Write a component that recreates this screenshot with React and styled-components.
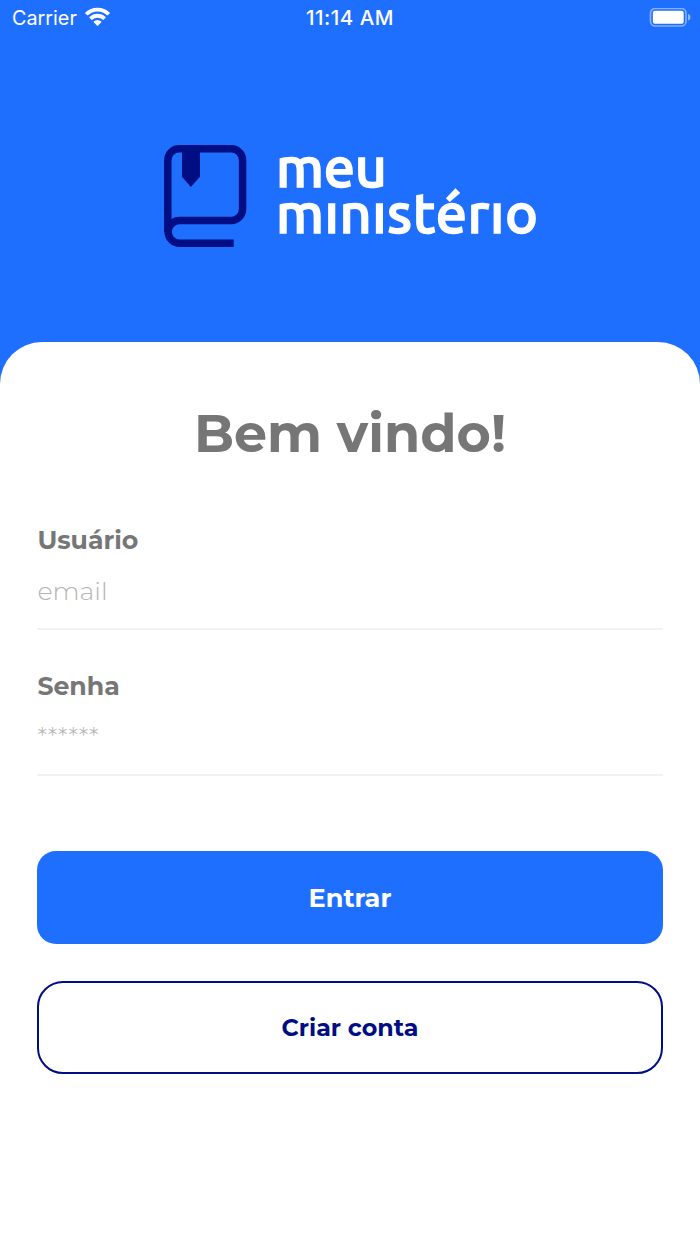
import React from 'react'
import styled, { createGlobalStyle } from 'styled-components'

const blue = '#1f6fff'
const navy = '#000d83'
const gray = '#767676'

export default () => (
	<Screen>
		<GlobalStyle />
		<StatusBar />
		<Logo />
		<Panel>
			<Title>Bem vindo!</Title>
			<form onSubmit={e => e.preventDefault()}>
				<Field label="Usuário" name="user" placeholder="email" />
				<Field
					label="Senha"
					name="password"
					type="password"
					placeholder="******"
				/>
				<Actions>
					<Button type="submit">Entrar</Button>
					<Button type="button" $outline>
						Criar conta
					</Button>
				</Actions>
			</form>
		</Panel>
	</Screen>
)

const StatusBar = () => (
	<Bar>
		<Carrier>
			Carrier
			<WifiIcon width="27" height="20" viewBox="0 0 26 19" fill="#fff">
				<path d="M13 4.2c3.600 0 6.800 1.400 9.200 3.700.2.2.5.2.7 0l2-1.900c.2-.2.2-.5 0-.7A17.300 17.300 0 0 0 13 .5 17.300 17.300 0 0 0 1.100 5.300c-.2.2-.2.5 0 .7l2 1.900c.2.2.5.2.7 0A13.200 13.200 0 0 1 13 4.200z" />
				<path d="M13 10.300c2 0 3.800.7 5.100 1.900.2.2.5.2.7 0l2-2c.2-.2.2-.5 0-.7A11.400 11.400 0 0 0 13 6.400c-3 0-5.800 1.200-7.800 3.100-.2.2-.2.5 0 .7l2 2c.2.2.5.2.7 0A7.700 7.700 0 0 1 13 10.300z" />
				<path d="M16.700 13.900c.2.2.2.5 0 .7l-3.300 3.300c-.2.2-.5.2-.7 0l-3.300-3.300c-.2-.2-.2-.5 0-.7a5.500 5.500 0 0 1 7.300 0z" />
			</WifiIcon>
		</Carrier>
		<Clock>11:14 AM</Clock>
		<Battery>
			<svg width="42" height="20" viewBox="0 0 42 20">
				<rect
					x="1.500"
					y="0.500"
					width="35.500"
					height="17.500"
					rx="4.800"
					fill="none"
					stroke="#fff"
					strokeOpacity="0.45"
					strokeWidth="1.700"
				/>
				<rect x="3.900" y="2.800" width="30.800" height="13" rx="2" fill="#fff" />
				<path
					d="M39 5.800c1.800.8 2.400 2 2.400 3.400S40.800 11.800 39 12.600z"
					fill="#fff"
					fillOpacity="0.5"
				/>
			</svg>
		</Battery>
	</Bar>
)

const Logo = () => (
	<LogoContainer>
		<svg width="83" height="102" viewBox="0 0 83 102">
			<path
				d="M69.700 98.200H15.500a11.350 11.350 0 0 1 0-22.700H67.200a11.400 11.400 0 0 0 11.400-11.400V15.200a11.400 11.400 0 0 0-11.400-11.400H15.200A11.400 11.400 0 0 0 3.800 15.200V87"
				fill="none"
				stroke={navy}
				strokeWidth="7.500"
			/>
			<path d="M18 4h18v27.800L26.800 42 18 31.800z" fill={navy} />
		</svg>
		<Wordmark aria-label="meu ministério">
			<Word $spacing="-0.300px">meu</Word>
			<Word $spacing="0.550px">mınıstérıo</Word>
		</Wordmark>
	</LogoContainer>
)

const Field = ({ label, name, type = 'text', placeholder }) => (
	<FieldContainer>
		<FieldLabel htmlFor={name}>{label}</FieldLabel>
		<Input id={name} name={name} type={type} placeholder={placeholder} />
	</FieldContainer>
)

const GlobalStyle = createGlobalStyle`
	* {
		box-sizing: border-box;
	}

	body {
		margin: 0;
		background: #fff;
		font-family: Montserrat, Inter, sans-serif;
	}
`

const Screen = styled.main`
	display: flex;
	flex-direction: column;
	min-height: 1244px;
	background: ${blue};
`

const Bar = styled.header`
	display: grid;
	grid-template-columns: 1fr auto 1fr;
	align-items: center;
	height: 36px;
	padding: 0 9px 0 12px;
	color: #fff;
	font-family: Inter, sans-serif;
	font-size: 20px;
`

const Carrier = styled.div`
	display: flex;
	align-items: center;
	gap: 7px;
	font-size: 19.800px;
`

const WifiIcon = styled.svg`
	margin-bottom: 3px;
`

const Clock = styled.time`
	margin: 0 3px 2px 0;
	font-size: 20.500px;
	font-weight: 500;
	letter-spacing: 0.500px;
`

const Battery = styled.div`
	display: flex;
	justify-content: flex-end;
`

const LogoContainer = styled.div`
	display: flex;
	align-items: flex-start;
	height: 306px;
	padding: 109px 0 0 164px;
`

const Wordmark = styled.div`
	display: flex;
	flex-direction: column;
	margin: -1px 0 0 29px;
	color: #fff;
	font-family: Ubuntu, 'Noto Sans', sans-serif;
	font-size: 55.700px;
	font-weight: 500;
	line-height: 46px;
	-webkit-text-stroke: 1.500px #fff;
`

const Word = styled.span`
	letter-spacing: ${props => props.$spacing};
	white-space: nowrap;
`

const Panel = styled.section`
	flex: 1;
	padding: 58px 37.400px 0;
	border-radius: 42px 42px 0 0;
	background: #fff;
`

const Title = styled.h1`
	margin: 0 0 62px;
	color: ${gray};
	font-size: 52.400px;
	font-weight: 700;
	line-height: 66px;
	text-align: center;
	white-space: nowrap;
`

const FieldContainer = styled.div`
	display: flex;
	flex-direction: column;
	height: 102px;
	margin-bottom: 44px;
	border-bottom: 2px solid #f2f2f4;
`

const FieldLabel = styled.label`
	color: ${gray};
	font-size: 25.200px;
	font-weight: 700;
	line-height: 24px;
`

const Input = styled.input`
	width: 100%;
	height: 40px;
	margin-top: ${props => (props.type === 'password' ? '17px' : '18px')};
	padding: 0;
	border: 0;
	outline: 0;
	background: transparent;
	font-family: inherit;
	font-size: 25.400px;
	font-weight: 300;
	letter-spacing: ${props => (props.type === 'password' ? '0.300px' : '0')};

	&::placeholder {
		color: #b5b5b5;
		opacity: 1;
	}
`

const Actions = styled.div`
	display: flex;
	flex-direction: column;
	gap: 37px;
	padding-top: 31px;
`

const Button = styled.button`
	height: 93px;
	border: ${props => (props.$outline ? `2px solid ${navy}` : '0')};
	border-radius: ${props => (props.$outline ? '26px' : '19px')};
	background: ${props => (props.$outline ? '#fff' : blue)};
	color: ${props => (props.$outline ? navy : '#fff')};
	font-family: inherit;
	font-size: ${props => (props.$outline ? '23.800px' : '25.600px')};
	font-weight: 700;
`
